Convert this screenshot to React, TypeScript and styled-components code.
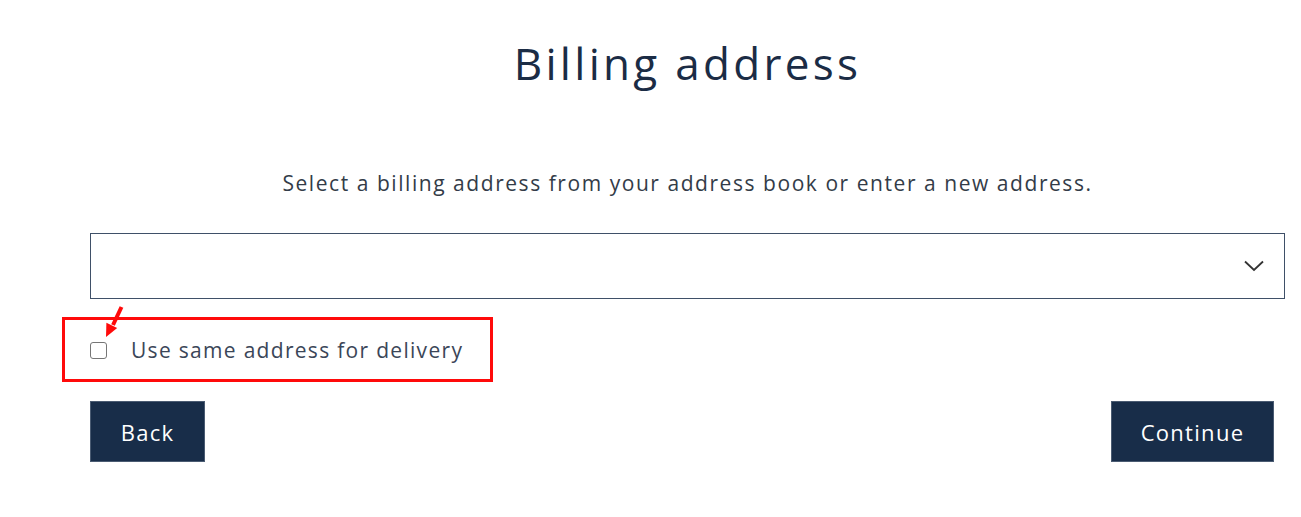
import React from 'react';
import styled, { createGlobalStyle } from 'styled-components';

const GlobalStyle = createGlobalStyle`
  body {
    margin: 0;
    background: #ffffff;
    font-family: 'Open Sans', 'Noto Sans', sans-serif;
  }
`;

const Page = styled.div`
  width: 1301px;
  height: 517px;
  box-sizing: border-box;
  padding: 0 16px 0 90px;
  overflow: hidden;
`;

const Title = styled.h1`
  margin: 33px 0 0;
  font-size: 44px;
  line-height: 60px;
  font-weight: 400;
  letter-spacing: 3.3px;
  color: #1b2c45;
  text-align: center;
`;

const Intro = styled.p`
  margin: 77px 0 0;
  font-size: 21px;
  line-height: 26px;
  letter-spacing: 1.55px;
  color: #333c48;
  text-align: center;
`;

const SelectBox = styled.div`
  display: flex;
  align-items: center;
  justify-content: flex-end;
  height: 66px;
  margin-top: 37px;
  box-sizing: border-box;
  border: 1px solid #3f5068;
  padding-right: 20px;
`;

const OptionRow = styled.label`
  position: relative;
  display: flex;
  align-items: center;
  gap: 24px;
  margin-top: 40px;
  height: 22px;
  font-size: 21px;
  letter-spacing: 1.3px;
  color: #3b4658;
  cursor: pointer;
`;

const Checkbox = styled.span`
  width: 15px;
  height: 15px;
  border: 1.5px solid #767676;
  border-radius: 3px;
  background: #fff;
`;

const Highlight = styled.span`
  position: absolute;
  left: -28px;
  top: -22px;
  width: 431px;
  height: 65px;
  box-sizing: border-box;
  border: 3px solid #ff0a0a;
  pointer-events: none;
`;

const Pointer = styled.svg`
  position: absolute;
  left: 10px;
  top: -33px;
  overflow: visible;
`;

const ButtonRow = styled.div`
  display: flex;
  justify-content: space-between;
  margin-top: 40px;
  padding-right: 11px;
`;

const Button = styled.button<{ $width: number }>`
  width: ${(p) => p.$width}px;
  height: 61px;
  border: 1px solid #4a5b72;
  background: #182d49;
  color: #ffffff;
  font-family: 'Open Sans', 'Noto Sans', sans-serif;
  font-size: 22px;
  letter-spacing: 1.3px;
  cursor: pointer;
`;

const App = () => {
  return (
    <Page>
      <GlobalStyle />
      <Title>Billing address</Title>
      <Intro>Select a billing address from your address book or enter a new address.</Intro>
      <SelectBox>
        <svg width="20" height="12" viewBox="0 0 20 12">
          <path d="M1 1.5 L10 10 L19 1.5" fill="none" stroke="#333" strokeWidth="1.8" />
        </svg>
      </SelectBox>
      <OptionRow>
        <Checkbox />
        Use same address for delivery
        <Highlight />
        <Pointer width="30" height="32" viewBox="0 0 30 32">
          <path d="M21.5 1 L13 19" stroke="#ff0a0a" strokeWidth="4" fill="none" />
          <polygon points="6,31 6.4,16.7 17.2,22.1" fill="#ff0a0a" />
        </Pointer>
      </OptionRow>
      <ButtonRow>
        <Button $width={115}>Back</Button>
        <Button $width={163}>Continue</Button>
      </ButtonRow>
    </Page>
  );
};

export default App;
